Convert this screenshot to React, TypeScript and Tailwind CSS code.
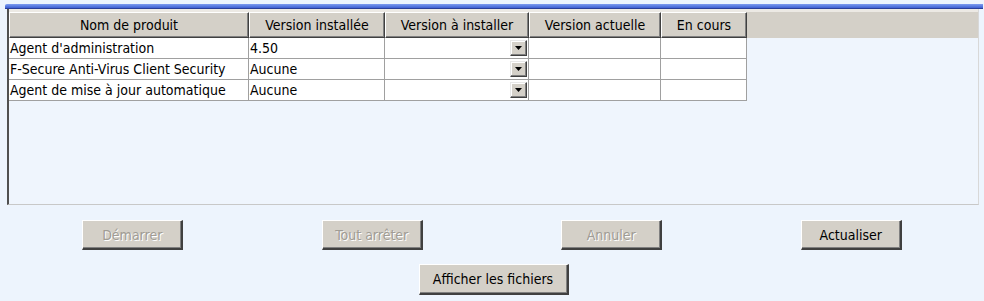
import React from "react";

const cols = [240, 136, 144, 132, 86];
const headers = ["Nom de produit", "Version installée", "Version à installer", "Version actuelle", "En cours"];
const rows = [
  ["Agent d'administration", "4.50"],
  ["F-Secure Anti-Virus Client Security", "Aucune"],
  ["Agent de mise à jour automatique", "Aucune"],
];

function HeaderCell({ w, label }: { w: number; label: string }) {
  return (
    <div
      className="h-full shrink-0 flex items-center justify-center bg-[#d4d0c8] border-t border-l border-t-white border-l-white border-r border-b border-r-[#404040] border-b-[#404040] shadow-[inset_-1px_-1px_#808080] text-black"
      style={{ width: w }}
    >
      {label}
    </div>
  );
}

function Combo() {
  return (
    <div className="ml-auto mr-[1px] w-[17px] h-[16px] bg-[#d4d0c8] border-t border-l border-t-[#e8e8e8] border-l-[#e8e8e8] border-r border-b border-r-[#404040] border-b-[#404040] shadow-[inset_-1px_-1px_#808080,inset_1px_1px_#fff] flex items-center justify-center">
      <svg width="7" height="4" viewBox="0 0 7 4">
        <path d="M0 0h7L3.5 4z" fill="#000" />
      </svg>
    </div>
  );
}

function Btn({ label, disabled, w = 101, h = 30 }: { label: string; disabled?: boolean; w?: number; h?: number }) {
  return (
    <div
      className={
        "flex items-center justify-center bg-[#d4d0c8] border-t border-l border-t-white border-l-white border-r-2 border-b-2 border-r-[#404040] border-b-[#404040] shadow-[inset_-1px_-1px_#808080] " +
        (disabled ? "text-[#a09c94] [text-shadow:1px_1px_0_#ffffff]" : "text-black")
      }
      style={{ width: w, height: h }}
    >
      {label}
    </div>
  );
}

export default function App() {
  return (
    <div className="w-[984px] h-[301px] bg-[#edf4fd] pt-[4px] text-[14px] font-['DejaVu_Sans_Condensed','DejaVu_Sans',sans-serif] leading-none overflow-hidden">
      <div className="ml-[5px] w-[978px] h-[5px] bg-gradient-to-b from-[#7e9cf0] to-[#3e5fd2] border-b border-b-[#2a3f9a] rounded-tl-[2px]" />
      <div className="ml-[7px] w-[972px] h-[196px] border-l-2 border-l-[#505050] border-r border-r-[#d8d8d8] border-b border-b-[#c8c8c8] bg-[#eff5fd] flex flex-col">
        <div className="h-[29px] bg-[#d4d0c8] border-t-[3px] border-t-[#ece9e4] flex">
          {cols.map((w, i) => (
            <HeaderCell key={i} w={w} label={headers[i]} />
          ))}
        </div>
        {rows.map((r, ri) => (
          <div key={ri} className="flex h-[21px]">
            {cols.map((w, ci) => (
              <div
                key={ci}
                className="h-full shrink-0 bg-white border-r border-b border-[#a0a0a0] flex items-center pl-[1px]"
                style={{ width: w }}
              >
                {ci === 0 ? r[0] : ci === 1 ? r[1] : ci === 2 ? <Combo /> : null}
              </div>
            ))}
          </div>
        ))}
      </div>
      <div className="grid grid-cols-4 px-[13px] mt-[15px] justify-items-center">
        <Btn label="Démarrer" disabled />
        <Btn label="Tout arrêter" disabled />
        <Btn label="Annuler" disabled />
        <Btn label="Actualiser" />
      </div>
      <div className="flex justify-center mt-[14px] ml-[3px]">
        <Btn label="Afficher les fichiers" w={150} h={31} />
      </div>
    </div>
  );
}
